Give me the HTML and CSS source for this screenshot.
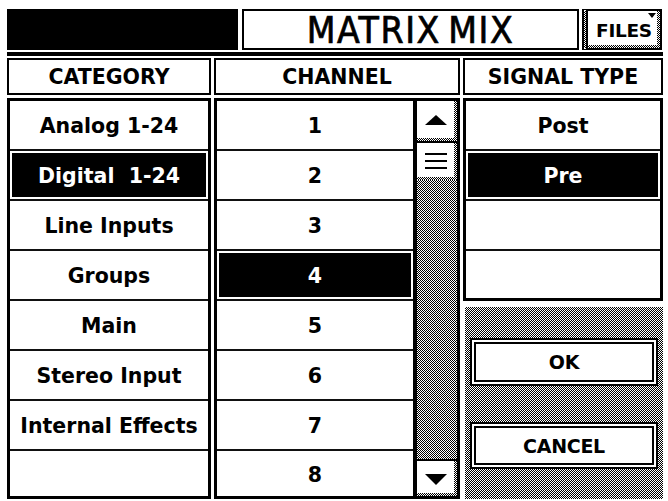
FILE: index.html
```html
<!DOCTYPE html>
<html>
<head>
<meta charset="utf-8">
<link rel="stylesheet" href="styles.css">
</head>
<body>
<div class="screen">
  <div class="topbar">
    <div class="blackblock"></div>
    <div class="title">MATRIX MIX</div>
    <div class="files">FILES<span class="files-arrow"></span></div>
  </div>
  <div class="rule"></div>
  <div class="grid">
    <div class="head">CATEGORY</div>
    <div class="head">CHANNEL</div>
    <div class="head">SIGNAL TYPE</div>

    <div class="list cat">
      <div class="row">Analog 1-24</div>
      <div class="row sel">Digital&nbsp; 1-24</div>
      <div class="row">Line Inputs</div>
      <div class="row">Groups</div>
      <div class="row">Main</div>
      <div class="row">Stereo Input</div>
      <div class="row">Internal Effects</div>
      <div class="row"></div>
    </div>

    <div class="list chan">
      <div class="rows">
        <div class="row">1</div>
        <div class="row">2</div>
        <div class="row">3</div>
        <div class="row sel">4</div>
        <div class="row">5</div>
        <div class="row">6</div>
        <div class="row">7</div>
        <div class="row">8</div>
      </div>
      <div class="scroll">
        <div class="sbtn up">
          <svg width="22" height="10" viewBox="0 0 22 10"><polygon points="11,0 22,10 0,10" fill="#000"/></svg>
        </div>
        <div class="thumb">
          <svg width="22" height="16" viewBox="0 0 22 16"><rect x="0" y="0" width="22" height="2" fill="#000"/><rect x="0" y="7" width="22" height="2" fill="#000"/><rect x="0" y="14" width="22" height="2" fill="#000"/></svg>
        </div>
        <div class="track"></div>
        <div class="sbtn down">
          <svg width="22" height="11" viewBox="0 0 22 11"><polygon points="0,0 22,0 11,11" fill="#000"/></svg>
        </div>
      </div>
    </div>

    <div class="sigcol">
      <div class="list sig">
        <div class="row">Post</div>
        <div class="row sel">Pre</div>
        <div class="row"></div>
        <div class="row"></div>
      </div>
      <div class="panel">
        <button class="btn ok">OK</button>
        <button class="btn cancel">CANCEL</button>
      </div>
    </div>
  </div>
</div>
</body>
</html>
```

FILE: styles.css
```css
* { box-sizing: border-box; }

html, body {
  margin: 0;
  padding: 0;
  background: #fff;
  width: 668px;
  height: 501px;
  overflow: hidden;
}

.screen {
  padding: 9px 5px 0 7px;
  font-family: "DejaVu Sans", "Liberation Sans", sans-serif;
  font-weight: bold;
  color: #000;
}

.topbar {
  display: flex;
  height: 41px;
}

.blackblock {
  width: 231px;
  background: #000;
}

.title {
  width: 337px;
  margin-left: 4px;
  border: 2px solid #000;
  background: #fff;
  display: flex;
  align-items: center;
  justify-content: center;
  font-family: "Liberation Sans Narrow", "DejaVu Sans Condensed", sans-serif;
  font-weight: normal;
  font-size: 37px;
  letter-spacing: 1.6px;
  word-spacing: -5px;
  -webkit-text-stroke: 0.7px #000;
  padding-top: 1px;
}

.files {
  position: relative;
  width: 80px;
  margin-left: 3px;
  border-top: 2px solid #000;
  border-right: 2px solid #000;
  border-bottom: 2px solid #000;
  border-left: 6px double #000;
  background:
    linear-gradient(#fff, #fff) 0 0 / calc(100% - 3px) calc(100% - 3px) no-repeat,
    repeating-conic-gradient(#000 0% 25%, #fff 0% 50%) 0 0 / 2px 2px;
  display: flex;
  align-items: center;
  justify-content: center;
  font-size: 18.5px;
  letter-spacing: -0.3px;
  padding-top: 2px;
}

.files-arrow {
  position: absolute;
  right: 4px;
  top: 2px;
  width: 0;
  height: 0;
  border-left: 4px solid transparent;
  border-right: 4px solid transparent;
  border-top: 5px solid #000;
}

.rule {
  height: 4px;
  background: #000;
  margin-top: 2px;
}

.grid {
  margin-top: 2px;
  display: grid;
  grid-template-columns: 204px 246px 200px;
  grid-template-rows: 37px 401px;
  column-gap: 3px;
  row-gap: 3px;
}

.head {
  border: 2px solid #000;
  display: flex;
  align-items: center;
  justify-content: center;
  font-size: 20.5px;
  letter-spacing: 0;
}

.list {
  border: 3px solid #000;
  background: #fff;
}

.cat, .rows {
  display: grid;
  grid-template-rows: repeat(7, 50px) 1fr;
}

.row {
  border-bottom: 2px solid #111;
  display: flex;
  align-items: center;
  justify-content: center;
  font-size: 20.5px;
  letter-spacing: 0;
  white-space: nowrap;
  padding-top: 2px;
}

.row:last-child { border-bottom: none; }

.row.sel {
  background: #000;
  color: #fff;
  box-shadow: inset 0 0 0 2px #fff;
}

.chan {
  display: flex;
}

.rows {
  flex: 1;
}

.scroll {
  width: 44px;
  border-left: 4px solid #000;
  display: flex;
  flex-direction: column;
}

.sbtn, .thumb {
  display: flex;
  align-items: center;
  justify-content: center;
  background:
    linear-gradient(#fff, #fff) 0 0 / calc(100% - 3px) calc(100% - 3px) no-repeat,
    repeating-conic-gradient(#000 0% 25%, #fff 0% 50%) 0 0 / 2px 2px;
  padding-right: 3px;
}

.sbtn.up {
  height: 42px;
  border-bottom: 2px solid #000;
  padding-bottom: 3px;
}

.thumb {
  height: 37px;
  padding-bottom: 2px;
}

.track {
  flex: 1;
  background: repeating-conic-gradient(#000 0% 25%, #fff 0% 50%) 0 0 / 2px 2px;
}

.sbtn.down {
  height: 37px;
  border-top: 2px solid #000;
  padding-top: 1px;
}

.sigcol {
  display: flex;
  flex-direction: column;
}

.sig {
  height: 203px;
  display: grid;
  grid-template-rows: repeat(3, 50px) 1fr;
}

.panel {
  flex: 1;
  margin-top: 6px;
  margin-left: 2px;
  padding: 31px 5px 0 5px;
  display: flex;
  flex-direction: column;
  gap: 36px;
  background: repeating-conic-gradient(#000 0% 25%, #fff 0% 50%) 0 0 / 2px 2px;
}

.btn {
  height: 48px;
  border: 2px solid #000;
  background: #fff;
  box-shadow: inset 0 0 0 2px #fff, inset 0 0 0 4px #000;
  font-family: "DejaVu Sans", "Liberation Sans", sans-serif;
  font-weight: bold;
  font-size: 19px;
  letter-spacing: -0.3px;
  color: #000;
  padding: 0;
}

.btn.cancel { height: 47px; }
```
